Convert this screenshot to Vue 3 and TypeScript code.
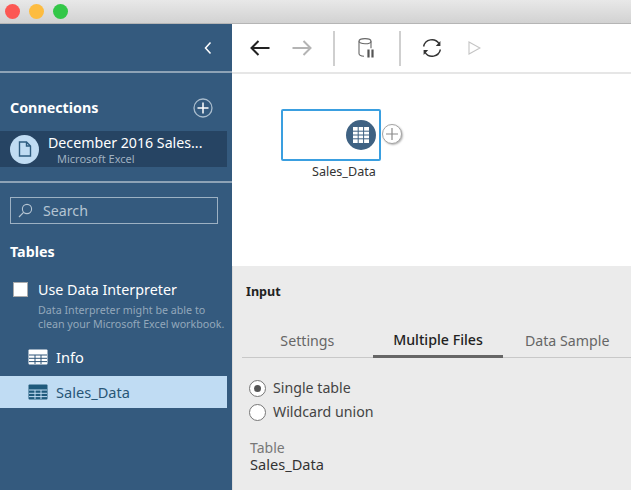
<template>
  <div class="window">
    <header class="titlebar">
      <span class="light red"></span>
      <span class="light yellow"></span>
      <span class="light green"></span>
    </header>
    <div class="main">
      <aside class="sidebar">
        <div class="side-top">
          <svg width="10" height="14" viewBox="0 0 10 14"><path d="M7.5 1.5 2.5 7l5 5.5" fill="none" stroke="#fff" stroke-width="1.5" /></svg>
        </div>
        <div class="conn-head">
          <h2>Connections</h2>
          <svg width="20" height="20" viewBox="0 0 20 20">
            <circle cx="10" cy="10" r="9" fill="none" stroke="#a9bccd" stroke-width="1.3" />
            <path d="M4.5 10h11M10 4.5v11" stroke="#fff" stroke-width="1.5" />
          </svg>
        </div>
        <div class="conn-row">
          <span class="doc-badge">
            <svg width="14" height="16" viewBox="0 0 14 16"><path d="M1.5 1h7l4 4v10h-11zM8.5 1v4h4" fill="none" stroke="#2e5c80" stroke-width="1.4" /></svg>
          </span>
          <div class="conn-text">
            <div class="conn-name">{{ connection.name }}</div>
            <div class="conn-type">{{ connection.type }}</div>
          </div>
        </div>
        <div class="side-rule"></div>
        <div class="search">
          <svg width="15" height="15" viewBox="0 0 15 15">
            <circle cx="9" cy="6" r="4.6" fill="none" stroke="#b5c5d3" stroke-width="1.1" />
            <path d="M5.6 9.4 1 14" stroke="#b5c5d3" stroke-width="1.2" />
          </svg>
          <span>Search</span>
        </div>
        <h2 class="tables-title">Tables</h2>
        <div class="interpreter">
          <span class="checkbox"></span>
          <div>
            <div class="interp-title">Use Data Interpreter</div>
            <p>Data Interpreter might be able to<br />clean your Microsoft Excel workbook.</p>
          </div>
        </div>
        <div v-for="t in tables" :key="t.name" class="table-row" :class="{ selected: t.selected }">
          <svg class="grid-icon" width="20" height="16" viewBox="0 0 20 16">
            <rect x="0.5" y="0.5" width="19" height="15" rx="1" :fill="t.selected ? '#1f5a7c' : '#fff'" />
            <path d="M1.5 6.5h17v8h-17z" :fill="t.selected ? '#1f5a7c' : '#fff'" />
            <path d="M1 6h18M1 9.3h18M1 12.6h18M7 6v9M13 6v9" :stroke="t.selected ? '#c0dcf3' : '#2f5578'" stroke-width="1" fill="none" />
          </svg>
          <span>{{ t.name }}</span>
        </div>
      </aside>

      <section class="content">
        <div class="toolbar">
          <svg class="tb-arrow" width="20" height="16" viewBox="0 0 20 16"><path d="M19.5 8H1.5M8.5 1 1.5 8l7 7" fill="none" stroke="#222" stroke-width="2" /></svg>
          <svg class="tb-arrow" width="20" height="16" viewBox="0 0 20 16"><path d="M.5 8h18M11.5 1l7 7-7 7" fill="none" stroke="#b4b4b4" stroke-width="2" /></svg>
          <span class="tb-sep"></span>
          <svg class="tb-db" width="18" height="20" viewBox="0 0 18 20">
            <ellipse cx="7" cy="3.2" rx="6" ry="2.6" fill="none" stroke="#666" stroke-width="1.1" />
            <path d="M1 3.2v12.3c0 1.6 2.2 2.6 5 2.7M13 3.2v7" fill="none" stroke="#666" stroke-width="1.1" />
            <path d="M10.5 11.5v8M14.5 11.5v8" stroke="#555" stroke-width="2.2" />
          </svg>
          <span class="tb-sep second"></span>
          <svg class="tb-sync" width="20" height="20" viewBox="0 0 20 20">
            <path d="M1.6 8.5A8.5 8.5 0 0 1 17 5.6M18.4 11.5A8.5 8.5 0 0 1 3 14.4" fill="none" stroke="#333" stroke-width="1.4" />
            <path d="M18.4 3v5h-4.6zM1.6 17v-5h4.6z" fill="#333" />
          </svg>
          <svg class="tb-play" width="13" height="14" viewBox="0 0 13 14"><path d="M1 1l11 6-11 6z" fill="none" stroke="#c4c4c4" stroke-width="1.1" /></svg>
        </div>

        <div class="canvas">
          <div class="node">
            <span class="node-badge">
              <svg width="16" height="16" viewBox="0 0 16 16"><path fill="#fff" d="M0 0h16v16H0z" /><path d="M0 4.2h16M0 8h16M0 11.8h16M5.2 0v16M10.6 0v16" stroke="#3f6283" stroke-width="1" /></svg>
            </span>
            <span class="node-add">
              <svg width="12" height="12" viewBox="0 0 12 12"><path d="M0 6h12M6 0v12" stroke="#8a8a8a" stroke-width="1.2" /></svg>
            </span>
            <span class="node-label">Sales_Data</span>
          </div>
        </div>

        <div class="panel">
          <h3>Input</h3>
          <nav class="tabs">
            <span v-for="tab in tabs" :key="tab" class="tab" :class="{ active: tab === activeTab }">{{ tab }}</span>
          </nav>
          <div class="radios">
            <label v-for="opt in options" :key="opt" class="radio">
              <span class="radio-dot" :class="{ on: opt === choice }"></span>{{ opt }}
            </label>
          </div>
          <div class="field-label">Table</div>
          <div class="field-value">Sales_Data</div>
        </div>
      </section>
    </div>
  </div>
</template>

<script setup lang="ts">
import { ref } from 'vue'

const connection = { name: 'December 2016 Sales...', type: 'Microsoft Excel' }
const tables = [
  { name: 'Info', selected: false },
  { name: 'Sales_Data', selected: true }
]
const tabs = ['Settings', 'Multiple Files', 'Data Sample']
const activeTab = ref('Multiple Files')
const options = ['Single table', 'Wildcard union']
const choice = ref('Single table')
</script>

<style>
html, body { margin: 0; overflow: hidden; }
</style>

<style scoped>
.window {
  width: 631px;
  height: 490px;
  display: flex;
  flex-direction: column;
  font-family: "Noto Sans", "Open Sans", sans-serif;
  overflow: hidden;
}
.titlebar {
  height: 23px;
  flex: none;
  display: flex;
  align-items: center;
  gap: 9px;
  padding-left: 5px;
  background: linear-gradient(#e8e8e8, #d2d2d2);
  border-bottom: 1px solid #b5b5b5;
}
.light { width: 15px; height: 15px; border-radius: 50%; }
.red { background: #fc5753; }
.yellow { background: #fdbc40; }
.green { background: #33c748; }
.main { flex: 1; display: flex; min-height: 0; }
.sidebar {
  width: 232px;
  flex: none;
  background: #345a7e;
  color: #fff;
}
.side-top {
  height: 49px;
  display: flex;
  align-items: center;
  justify-content: flex-end;
  padding-right: 19px;
  box-sizing: border-box;
  border-bottom: 2px solid #8ea3b6;
}
.conn-head {
  display: flex;
  align-items: center;
  justify-content: space-between;
  padding: 25px 19px 0 10px;
  height: 20px;
}
h2 { margin: 0; font-size: 14.3px; font-weight: 700; line-height: 20px; }
.conn-row {
  display: flex;
  align-items: center;
  width: 227px;
  height: 36px;
  margin-top: 13px;
  padding-left: 10px;
  box-sizing: border-box;
  background: #264463;
}
.doc-badge {
  width: 29px;
  height: 29px;
  border-radius: 50%;
  background: #c0dcf3;
  display: flex;
  align-items: center;
  justify-content: center;
  flex: none;
}
.conn-text { margin-left: 9px; }
.conn-name { font-size: 14.2px; line-height: 19px; white-space: nowrap; }
.conn-type { font-size: 11px; line-height: 13px; color: #9fb0c0; padding-left: 9px; }
.side-rule { height: 2px; background: #8ea3b6; margin-top: 14px; }
.search {
  margin: 14px 0 0 10px;
  width: 208px;
  height: 27px;
  box-sizing: border-box;
  border: 1px solid #9db1c3;
  display: flex;
  align-items: center;
  padding-left: 7px;
  gap: 10px;
  font-size: 14.2px;
  color: #b5c5d3;
}
.tables-title { margin: 18px 0 0 10px; }
.interpreter { display: flex; margin: 19px 0 0 13px; }
.checkbox {
  width: 15px;
  height: 15px;
  flex: none;
  background: #fff;
  border: 1px solid #aaa;
  box-sizing: border-box;
  margin-top: 1px;
}
.interp-title { margin-left: 10px; font-size: 14.3px; line-height: 18px; }
.interpreter p {
  margin: 4px 0 0 10px;
  font-size: 10.7px;
  line-height: 14px;
  color: #93a8bb;
  white-space: nowrap;
}
.table-row {
  display: flex;
  align-items: center;
  gap: 8px;
  width: 227px;
  height: 33px;
  padding-left: 28px;
  box-sizing: border-box;
  font-size: 14.6px;
}
.interpreter + .table-row { margin-top: 9px; }
.table-row.selected { background: #c0dcf3; color: #285676; margin-top: 3px; height: 32px; }
.content { flex: 1; display: flex; flex-direction: column; min-width: 0; }
.toolbar {
  height: 50px;
  flex: none;
  box-sizing: border-box;
  display: flex;
  align-items: center;
  padding-left: 18px;
  background: #fff;
  border-bottom: 2px solid #e6e6e6;
}
.tb-arrow + .tb-arrow { margin-left: 22px; }
.tb-sep { width: 2px; height: 35px; background: #cfcfcf; margin-left: 21px; }
.tb-db { margin-left: 23px; }
.tb-sep.second { margin-left: 23px; }
.tb-sync { margin-left: 21px; }
.tb-play { margin-left: 26px; }
.canvas { height: 192px; flex: none; background: #fff; position: relative; }
.node {
  position: absolute;
  left: 49px;
  top: 35px;
  width: 100px;
  height: 52px;
  box-sizing: border-box;
  border: 2px solid #3a9fe0;
  border-radius: 2px;
}
.node-badge {
  position: absolute;
  right: 3px;
  top: 9px;
  width: 30px;
  height: 30px;
  border-radius: 50%;
  background: #3f6283;
  display: flex;
  align-items: center;
  justify-content: center;
}
.node-add {
  position: absolute;
  left: 99px;
  top: 13px;
  width: 18px;
  height: 18px;
  border-radius: 50%;
  background: #fff;
  border: 1px solid #a5a5a5;
  box-shadow: 1px 1px 2px rgba(0, 0, 0, 0.3);
  display: flex;
  align-items: center;
  justify-content: center;
}
.node-label {
  position: absolute;
  left: 29px;
  top: 52px;
  font-size: 12.6px;
  color: #333;
  white-space: nowrap;
}
.panel {
  flex: 1;
  background: #ebebeb;
  border-left: 1px solid #dcdcdc;
  color: #333;
  padding-left: 9px;
}
h3 { margin: 17px 0 0 4px; font-size: 12.6px; line-height: 18px; font-weight: 700; color: #222; }
.tabs {
  display: flex;
  margin-top: 22px;
  border-bottom: 1px solid #c8c8c8;
  height: 35px;
  box-sizing: border-box;
}
.tab {
  font-size: 14.2px;
  color: #666;
  height: 35px;
  box-sizing: border-box;
  padding-top: 8px;
  text-align: center;
}
.tab:nth-child(1) { width: 131px; }
.tab:nth-child(2) { width: 131px; }
.tab:nth-child(3) { width: 128px; }
.tab.active { color: #222; font-weight: 500; border-bottom: 3px solid #666; padding-top: 7px; }
.radios { margin: 21px 0 0 7px; display: flex; flex-direction: column; gap: 6px; }
.radio { display: flex; align-items: center; gap: 7px; font-size: 14.2px; line-height: 18px; color: #444; }
.radio-dot {
  width: 17px;
  height: 17px;
  box-sizing: border-box;
  border-radius: 50%;
  background: #fff;
  border: 1px solid #777;
  display: flex;
  align-items: center;
  justify-content: center;
}
.radio-dot.on::after {
  content: "";
  width: 7px;
  height: 7px;
  border-radius: 50%;
  background: #555;
}
.field-label { margin: 18px 0 0 8px; font-size: 14px; line-height: 17px; color: #777; }
.field-value { margin-left: 8px; font-size: 14.6px; line-height: 17px; color: #333; }
</style>
